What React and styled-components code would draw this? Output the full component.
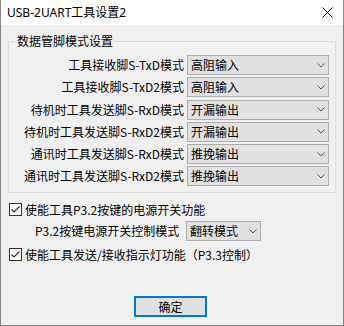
import React from "react";
import styled, { createGlobalStyle } from "styled-components";

const GlobalStyle = createGlobalStyle`
  html, body {
    margin: 0;
    padding: 0;
    background: #f0f0f0;
  }
`;

const Window = styled.div`
  width: 344px;
  height: 326px;
  box-sizing: border-box;
  border: 1px solid #858585;
  border-top: none;
  background: #f0f0f0;
  display: flex;
  flex-direction: column;
  font-family: "Noto Sans CJK SC", sans-serif;
  font-size: 12px;
  color: #000;
`;

const TitleBar = styled.div`
  height: 25px;
  background: #fff;
  display: flex;
  align-items: center;
  justify-content: space-between;
  padding: 0 9px 0 6px;
`;

const Title = styled.span`
  font-family: "Noto Sans", "Noto Sans CJK SC", sans-serif;
  font-size: 12px;
  line-height: 16px;
`;

const CloseIcon = styled.svg`
  width: 11px;
  height: 11px;
  margin-right: 1px;
`;

const Body = styled.div`
  flex: 1;
  display: flex;
  flex-direction: column;
  padding: 9px 7px 0 7px;
`;

const Group = styled.fieldset`
  margin: 0;
  border: 1px solid #dcdcdc;
  padding: 7px 6px 6px 7px;
  min-width: 0;
`;

const Legend = styled.legend`
  padding: 0 1px;
  font-size: 12px;
  line-height: 14px;
`;

const PinGrid = styled.div`
  display: grid;
  grid-template-columns: 1fr 142px;
  column-gap: 3px;
  row-gap: 2.3px;
`;

const PinLabel = styled.span`
  text-align: right;
  line-height: 20px;
  white-space: nowrap;
`;

const Combo = styled.div`
  width: ${(p) => p.$width}px;
  height: 20px;
  box-sizing: border-box;
  border: 1px solid #adadad;
  background: #e1e1e1;
  display: flex;
  align-items: center;
  justify-content: space-between;
  padding: 0 3px 0 3px;
  line-height: 18px;
  white-space: nowrap;
`;

const Chevron = styled.svg`
  width: 8px;
  height: 5px;
  flex: none;
`;

const CheckLine = styled.label`
  display: flex;
  align-items: center;
  height: 20px;
  margin-top: ${(p) => p.$top}px;
  padding-left: 1px;
  gap: 3px;
  white-space: nowrap;
`;

const Box = styled.span`
  width: 13px;
  height: 13px;
  box-sizing: border-box;
  border: 1px solid #333;
  background: #fff;
  display: flex;
  align-items: center;
  justify-content: center;
`;

const SubLine = styled.div`
  display: flex;
  align-items: center;
  height: 20px;
  margin-top: 2px;
  padding-left: 27px;
`;

const SubLabel = styled.span`
  width: 151px;
  white-space: nowrap;
  line-height: 20px;
`;

const Footer = styled.div`
  display: flex;
  justify-content: center;
  margin-top: 32px;
  padding-right: 3px;
`;

const OkButton = styled.button`
  width: 73px;
  height: 21px;
  box-sizing: border-box;
  border: 2px solid #0078d7;
  background: #e1e1e1;
  font-family: "Noto Sans CJK SC", sans-serif;
  font-size: 12px;
  line-height: 15px;
  color: #000;
  padding: 0;
`;

const pinRows = [
  ["工具接收脚S-TxD模式", "高阻输入"],
  ["工具接收脚S-TxD2模式", "高阻输入"],
  ["待机时工具发送脚S-RxD模式", "开漏输出"],
  ["待机时工具发送脚S-RxD2模式", "开漏输出"],
  ["通讯时工具发送脚S-RxD模式", "推挽输出"],
  ["通讯时工具发送脚S-RxD2模式", "推挽输出"],
];

function DropDown({ value, width }) {
  return (
    <Combo $width={width}>
      <span>{value}</span>
      <Chevron viewBox="0 0 8 5">
        <polyline points="0.5,0.5 4,4 7.5,0.5" fill="none" stroke="#606060" strokeWidth="1" />
      </Chevron>
    </Combo>
  );
}

function CheckBox() {
  return (
    <Box>
      <svg width="11" height="11" viewBox="0 0 11 11">
        <polyline points="1.5,5.5 4,8 9.5,2.5" fill="none" stroke="#333" strokeWidth="1.2" />
      </svg>
    </Box>
  );
}

function App() {
  return (
    <>
      <GlobalStyle />
      <Window>
        <TitleBar>
          <Title>USB-2UART工具设置2</Title>
          <CloseIcon viewBox="0 0 11 11">
            <line x1="0.5" y1="0.5" x2="10.5" y2="10.5" stroke="#000" strokeWidth="1" />
            <line x1="10.5" y1="0.5" x2="0.5" y2="10.5" stroke="#000" strokeWidth="1" />
          </CloseIcon>
        </TitleBar>
        <Body>
          <Group>
            <Legend>数据管脚模式设置</Legend>
            <PinGrid>
              {pinRows.map(([label, value]) => (
                <React.Fragment key={label}>
                  <PinLabel>{label}</PinLabel>
                  <DropDown value={value} width={142} />
                </React.Fragment>
              ))}
            </PinGrid>
          </Group>
          <CheckLine $top={6}>
            <CheckBox />
            使能工具P3.2按键的电源开关功能
          </CheckLine>
          <SubLine>
            <SubLabel>P3.2按键电源开关控制模式</SubLabel>
            <DropDown value="翻转模式" width={75} />
          </SubLine>
          <CheckLine $top={3}>
            <CheckBox />
            使能工具发送/接收指示灯功能（P3.3控制）
          </CheckLine>
          <Footer>
            <OkButton>确定</OkButton>
          </Footer>
        </Body>
      </Window>
    </>
  );
}

export default App;
